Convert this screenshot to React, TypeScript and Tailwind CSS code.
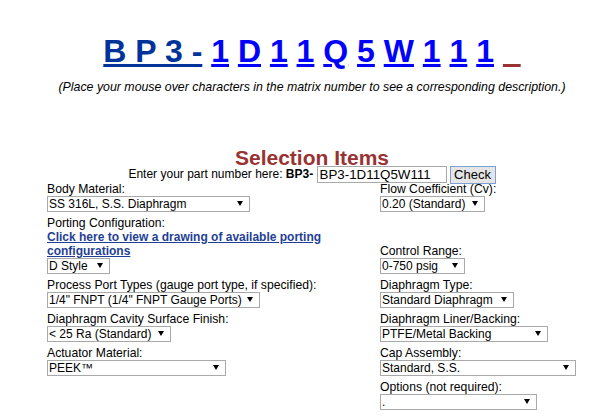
import type { ReactNode } from 'react';

const matrix = ['1', 'D', '1', '1', 'Q', '5', 'W', '1', '1', '1'];

function Arrow() {
  return (
    <svg
      width="6"
      height="5"
      viewBox="0 0 6 5"
      className="pointer-events-none absolute right-[7px] top-[5px]"
    >
      <polygon points="0,0 6,0 3,5" fill="#000" />
    </svg>
  );
}

// select box: fixed width, old-style flat look with a black ▼
function Pick({ w, value }: { w: string; value: string }) {
  return (
    <span className={`relative block h-[16px] ${w}`}>
      <select
        defaultValue={value}
        className="block h-[16px] w-full appearance-none rounded-none border border-[#a9a9a9] bg-white pl-[1px] pr-4 text-[12px] leading-[14px] text-black outline-none"
      >
        <option value={value}>{value}</option>
      </select>
      <Arrow />
    </span>
  );
}

function Field({ label, children }: { label: string; children: ReactNode }) {
  return (
    <div className="flex flex-col items-start">
      <span className="text-[12.2px] leading-[14px] text-black">{label}</span>
      {children}
    </div>
  );
}

export default function App() {
  return (
    <div className="min-h-[420px] bg-white pl-[13px] pt-[33px] font-['Liberation_Sans',Arial,sans-serif] text-black">
      {/* part number matrix */}
      <div className="text-center text-[32px] font-bold leading-[37px] whitespace-pre">
        <a className="text-[#003399] underline decoration-[3px]">B P 3 -</a>{' '}
        {matrix.map((c, i) => (
          <span key={i}>
            <a className="text-[#0000ff] underline decoration-[3px]">{c}</a>{' '}
          </span>
        ))}
        {/* empty slot marker */}
        <span className="text-transparent underline decoration-[#993333] decoration-[3px]">_</span>
      </div>
      <p className="mt-[10px] text-center text-[12.35px] italic leading-[14px]">
        (Place your mouse over characters in the matrix number to see a corresponding description.)
      </p>

      <h2 className="mt-[55px] text-center text-[21px] font-bold leading-[18px] text-[#993333]">
        Selection Items
      </h2>

      {/* part number entry */}
      <div className="-mt-[1px] flex h-[16px] items-start justify-center text-[12px] leading-[16px]">
        <span className="whitespace-pre">
          Enter your part number here: <b>BP3-</b>{' '}
        </span>
        <input
          defaultValue="BP3-1D11Q5W111"
          className="h-[17px] w-[130px] border border-[#a9a9a9] px-[2px] text-[13.33px] leading-[15px] text-black outline-none"
        />
        <button className="relative z-0 ml-[3px] h-[18px] w-[46px] border border-[#7aa0d6] bg-[#e5e5e5] text-[13px] leading-[16px] text-black">
          Check
        </button>
      </div>

      {/* options table */}
      <div className="relative z-10 ml-[34px] grid grid-cols-[333px_auto] items-end gap-y-[4px]">
        <Field label="Body Material:">
          <Pick w="w-[203px]" value="SS 316L, S.S. Diaphragm" />
        </Field>
        <Field label="Flow Coefficient (Cv):">
          <Pick w="w-[105px]" value="0.20 (Standard)" />
        </Field>

        <div className="flex flex-col items-start">
          <span className="text-[12.2px] leading-[14px]">Porting Configuration:</span>
          <a className="text-[12px] font-bold leading-[14px] text-[#1f3f95] underline">
            Click here to view a drawing of available porting configurations
          </a>
          <Pick w="w-[63px]" value="D Style" />
        </div>
        <Field label="Control Range:">
          <Pick w="w-[85px]" value="0-750 psig" />
        </Field>

        <Field label="Process Port Types (gauge port type, if specified):">
          <Pick w="w-[213px]" value={'1/4" FNPT (1/4" FNPT Gauge Ports)'} />
        </Field>
        <Field label="Diaphragm Type:">
          <Pick w="w-[134px]" value="Standard Diaphragm" />
        </Field>

        <Field label="Diaphragm Cavity Surface Finish:">
          <Pick w="w-[124px]" value="< 25 Ra (Standard)" />
        </Field>
        <Field label="Diaphragm Liner/Backing:">
          <Pick w="w-[168px]" value="PTFE/Metal Backing" />
        </Field>

        <Field label="Actuator Material:">
          <Pick w="w-[179px]" value="PEEK™" />
        </Field>
        <Field label="Cap Assembly:">
          <Pick w="w-[196px]" value="Standard, S.S." />
        </Field>

        <div />
        <Field label="Options (not required):">
          <Pick w="w-[157px]" value="." />
        </Field>
      </div>
    </div>
  );
}
